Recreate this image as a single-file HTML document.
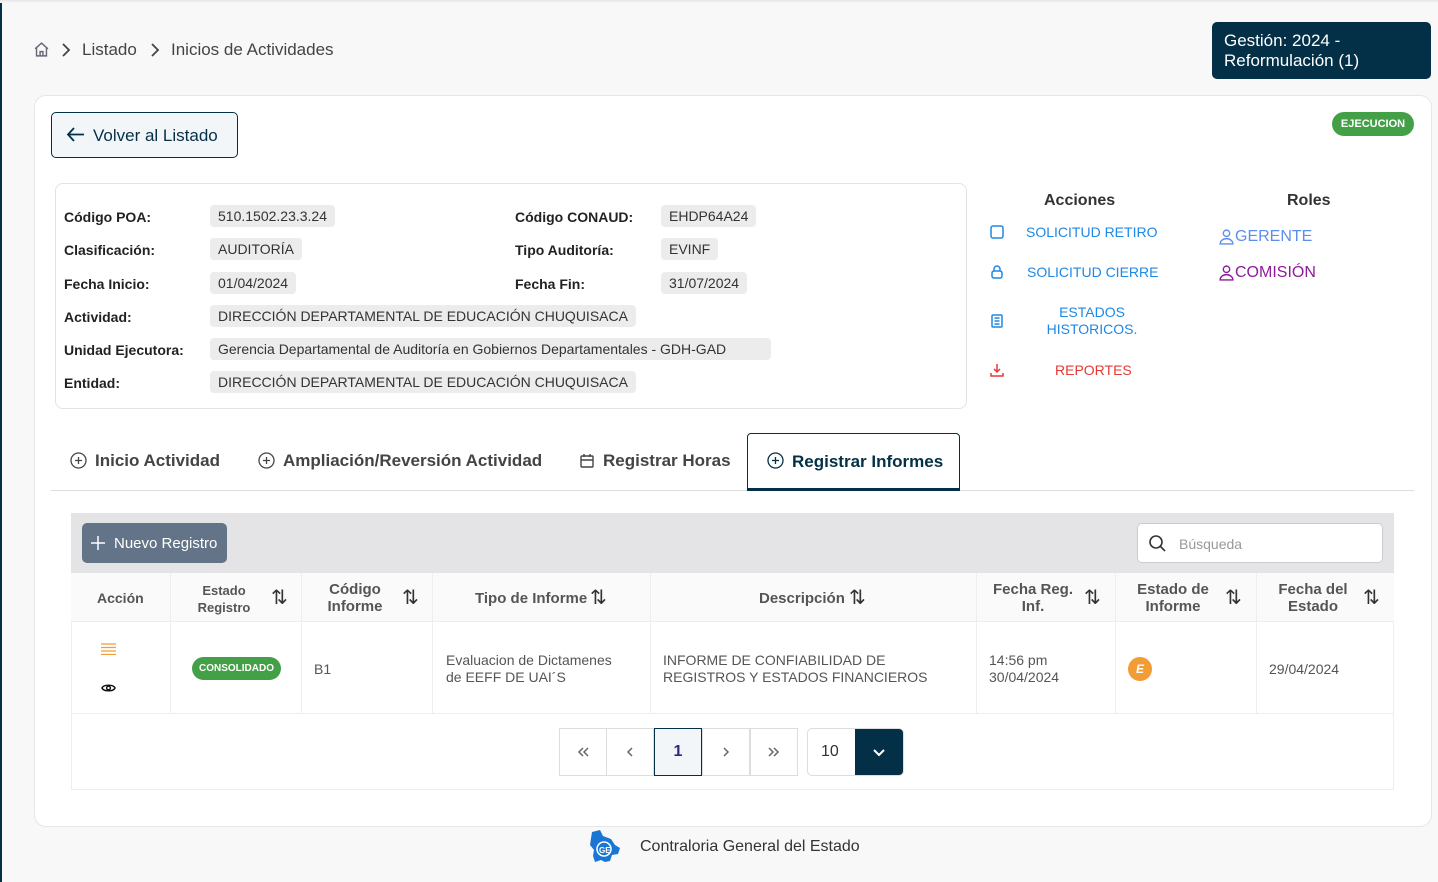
<!DOCTYPE html>
<html><head><meta charset="utf-8"><style>
*{box-sizing:border-box;margin:0;padding:0}
body{width:1438px;height:882px;background:#f8f8f8;font-family:"Liberation Sans",sans-serif;color:#333;position:relative;overflow:hidden}
.a{position:absolute}
.lbl{font-size:14px;font-weight:bold;color:#222}
.val{background:#ececec;border-radius:4px;padding:3px 8px;font-size:14px;color:#333;white-space:nowrap}
.th{font-size:14px;font-weight:bold;color:#555;text-align:center;line-height:17px}
.td{font-size:14px;color:#555;line-height:17px}
.vl{position:absolute;top:0;bottom:0;width:1px;background:#eee}
.pg{position:absolute;top:0;width:48px;height:48px;border:1px solid #ddd;display:flex;align-items:center;justify-content:center;color:#666;font-size:16px;background:#fff}
.so{position:absolute;font-size:20px;color:#333;line-height:20px}
</style></head><body>
<div class="a" style="left:0;top:0;width:2px;height:882px;background:#043047"></div>
<div class="a" style="left:0;top:0;width:1438px;height:3px;background:linear-gradient(#e6e6e6,#f8f8f8)"></div>
<svg class="a" style="left:33px;top:41px" width="17" height="17" viewBox="0 0 24 24" fill="none" stroke="#667" stroke-width="2"><path d="M3 11L12 3l9 8M5 9v12h14V9M10 21v-6h4v6"/></svg>
<svg class="a" style="left:61px;top:43px" width="10" height="14" viewBox="0 0 10 14" fill="none" stroke="#444" stroke-width="1.8"><path d="M2 1l6 6-6 6"/></svg>
<div class="a" style="left:82px;top:40px;font-size:17px;color:#444">Listado</div>
<svg class="a" style="left:150px;top:43px" width="10" height="14" viewBox="0 0 10 14" fill="none" stroke="#444" stroke-width="1.8"><path d="M2 1l6 6-6 6"/></svg>
<div class="a" style="left:171px;top:40px;font-size:17px;color:#444">Inicios de Actividades</div>
<div class="a" style="left:1212px;top:22px;width:219px;height:57px;background:#043047;border-radius:5px;color:#fff;font-size:17px;line-height:20px;padding:9px 12px">Gestión: 2024 -<br>Reformulación (1)</div>
<div class="a" style="left:34px;top:95px;width:1398px;height:732px;background:#fff;border:1px solid #e6e6e6;border-radius:12px"></div>
<div class="a" style="left:51px;top:112px;width:187px;height:46px;border:1px solid #043047;border-radius:5px;background:#f3f6f9;font-size:17px;color:#043047;padding:13px 0 0 41px">Volver al Listado</div>
<svg class="a" style="left:66px;top:126px" width="19" height="17" viewBox="0 0 19 17" fill="none" stroke="#043047" stroke-width="1.8"><path d="M18 8.5H2M8 2L2 8.5 8 15"/></svg>
<div class="a" style="left:1332px;top:112px;width:82px;height:24px;background:#43a047;border-radius:12px;color:#fff;font-size:11px;font-weight:bold;text-align:center;line-height:24px">EJECUCION</div>
<div class="a" style="left:55px;top:183px;width:912px;height:226px;border:1px solid #e3e3e3;border-radius:8px"></div>
<div class="a lbl" style="left:64px;top:209px">Código POA:</div><div class="a val" style="left:210px;top:205px">510.1502.23.3.24</div>
<div class="a lbl" style="left:515px;top:209px">Código CONAUD:</div><div class="a val" style="left:661px;top:205px">EHDP64A24</div>
<div class="a lbl" style="left:64px;top:242px">Clasificación:</div><div class="a val" style="left:210px;top:238px">AUDITORÍA</div>
<div class="a lbl" style="left:515px;top:242px">Tipo Auditoría:</div><div class="a val" style="left:661px;top:238px">EVINF</div>
<div class="a lbl" style="left:64px;top:276px">Fecha Inicio:</div><div class="a val" style="left:210px;top:272px">01/04/2024</div>
<div class="a lbl" style="left:515px;top:276px">Fecha Fin:</div><div class="a val" style="left:661px;top:272px">31/07/2024</div>
<div class="a lbl" style="left:64px;top:309px">Actividad:</div><div class="a val" style="left:210px;top:305px">DIRECCIÓN DEPARTAMENTAL DE EDUCACIÓN CHUQUISACA</div>
<div class="a lbl" style="left:64px;top:342px">Unidad Ejecutora:</div><div class="a val" style="left:210px;top:338px;width:561px">Gerencia Departamental de Auditoría en Gobiernos Departamentales - GDH-GAD</div>
<div class="a lbl" style="left:64px;top:375px">Entidad:</div><div class="a val" style="left:210px;top:371px">DIRECCIÓN DEPARTAMENTAL DE EDUCACIÓN CHUQUISACA</div>
<div class="a" style="left:1044px;top:192px;font-size:16px;font-weight:bold;color:#333">Acciones</div>
<div class="a" style="left:1287px;top:192px;font-size:16px;font-weight:bold;color:#333">Roles</div>
<svg class="a" style="left:989px;top:224px" width="16" height="16" viewBox="0 0 16 16" fill="none" stroke="#1e88e5" stroke-width="1.5"><rect x="2" y="2" width="12" height="12" rx="2"/></svg>
<div class="a" style="left:1026px;top:224px;font-size:14px;color:#1e88e5">SOLICITUD RETIRO</div>
<svg class="a" style="left:989px;top:264px" width="16" height="16" viewBox="0 0 16 16" fill="none" stroke="#1e88e5" stroke-width="1.5"><rect x="3" y="7" width="10" height="7" rx="2"/><path d="M5 7V5a3 3 0 016 0v2"/></svg>
<div class="a" style="left:1027px;top:264px;font-size:14px;color:#1e88e5">SOLICITUD CIERRE</div>
<svg class="a" style="left:989px;top:313px" width="16" height="16" viewBox="0 0 16 16" fill="none" stroke="#1e88e5" stroke-width="1.5"><rect x="3" y="2" width="10" height="12" rx="1"/><path d="M5.5 5h5M5.5 8h5M5.5 11h5"/></svg>
<div class="a" style="left:1030px;top:304px;width:124px;font-size:14px;color:#1e88e5;text-align:center;line-height:17px">ESTADOS HISTORICOS.</div>
<svg class="a" style="left:989px;top:362px" width="16" height="16" viewBox="0 0 16 16" fill="none" stroke="#e53935" stroke-width="1.5"><path d="M8 2v8M5 7l3 3 3-3M2 11v3h12v-3"/></svg>
<div class="a" style="left:1055px;top:362px;font-size:14px;color:#e53935">REPORTES</div>
<svg class="a" style="left:1218px;top:228px" width="17" height="17" viewBox="0 0 16 16" fill="none" stroke="#5c8ef0" stroke-width="1.3"><circle cx="8" cy="5" r="3"/><path d="M2 15c0-3 3-5 6-5s6 2 6 5z"/></svg>
<div class="a" style="left:1235px;top:228px;font-size:16px;color:#5c8ef0">GERENTE</div>
<svg class="a" style="left:1218px;top:264px" width="17" height="17" viewBox="0 0 16 16" fill="none" stroke="#8e1a9c" stroke-width="1.3"><circle cx="8" cy="5" r="3"/><path d="M2 15c0-3 3-5 6-5s6 2 6 5z"/></svg>
<div class="a" style="left:1235px;top:264px;font-size:16px;color:#8e1a9c">COMISIÓN</div>
<div class="a" style="left:51px;top:490px;width:1363px;height:1px;background:#ddd"></div>
<svg class="a" style="left:70px;top:452px" width="17" height="17" viewBox="0 0 17 17" fill="none" stroke="#444" stroke-width="1.3"><circle cx="8.5" cy="8.5" r="7.5"/><path d="M8.5 5v7M5 8.5h7"/></svg>
<div class="a" style="left:95px;top:451px;font-size:17px;font-weight:bold;color:#444">Inicio Actividad</div>
<svg class="a" style="left:258px;top:452px" width="17" height="17" viewBox="0 0 17 17" fill="none" stroke="#444" stroke-width="1.3"><circle cx="8.5" cy="8.5" r="7.5"/><path d="M8.5 5v7M5 8.5h7"/></svg>
<div class="a" style="left:283px;top:451px;font-size:17px;font-weight:bold;color:#444">Ampliación/Reversión Actividad</div>
<svg class="a" style="left:579px;top:453px" width="16" height="16" viewBox="0 0 16 16" fill="none" stroke="#444" stroke-width="1.4"><rect x="2" y="3" width="12" height="11" rx="1"/><path d="M2 7h12M5 1v3M11 1v3"/></svg>
<div class="a" style="left:603px;top:451px;font-size:17px;font-weight:bold;color:#444">Registrar Horas</div>
<div class="a" style="left:747px;top:433px;width:213px;height:58px;border:1px solid #043047;border-bottom:3px solid #043047;border-radius:4px 4px 0 0;background:#fff;font-size:17px;font-weight:bold;color:#043047;padding:18px 0 0 44px">Registrar Informes</div>
<svg class="a" style="left:767px;top:452px" width="17" height="17" viewBox="0 0 17 17" fill="none" stroke="#043047" stroke-width="1.3"><circle cx="8.5" cy="8.5" r="7.5"/><path d="M8.5 5v7M5 8.5h7"/></svg>
<div class="a" style="left:71px;top:513px;width:1323px;height:277px;border:1px solid #eee;background:#fff"></div>
<div class="a" style="left:71px;top:513px;width:1323px;height:60px;background:#e4e4e7"></div>
<div class="a" style="left:82px;top:523px;width:145px;height:40px;background:#647488;border-radius:5px;color:#fff;font-size:15px;padding:12px 0 0 32px">Nuevo Registro</div>
<svg class="a" style="left:91px;top:536px" width="14" height="14" viewBox="0 0 14 14" stroke="#fff" stroke-width="1.5"><path d="M7 0v14M0 7h14"/></svg>
<div class="a" style="left:1137px;top:523px;width:246px;height:40px;background:#fff;border:1px solid #ccc;border-radius:5px;font-size:14px;color:#999;padding:12px 0 0 41px">Búsqueda</div>
<svg class="a" style="left:1148px;top:534px" width="18" height="18" viewBox="0 0 18 18" fill="none" stroke="#333" stroke-width="1.6"><circle cx="8" cy="8" r="6"/><path d="M12.5 12.5L17 17"/></svg>
<div class="a" style="left:71px;top:573px;width:1323px;height:49px;background:#fafafa;border-bottom:1px solid #eee"></div>
<div class="a" style="left:71px;top:573px;width:1323px;height:141px;border-bottom:1px solid #eee">
<div class="vl" style="left:99px"></div><div class="vl" style="left:230px"></div><div class="vl" style="left:361px"></div><div class="vl" style="left:579px"></div><div class="vl" style="left:905px"></div><div class="vl" style="left:1044px"></div><div class="vl" style="left:1185px"></div>
</div>
<div class="a th" style="left:97px;top:590px">Acción</div>
<div class="a th" style="left:193px;top:582px;font-size:13px;width:62px">Estado Registro</div><div class="so" style="left:271px;top:588px">&#8645;</div>
<div class="a th" style="left:320px;top:581px;font-size:15px;width:70px">Código Informe</div><div class="so" style="left:402px;top:588px">&#8645;</div>
<div class="a th" style="left:475px;top:590px;font-size:15px">Tipo de Informe</div><div class="so" style="left:590px;top:588px">&#8645;</div>
<div class="a th" style="left:759px;top:590px;font-size:15px">Descripción</div><div class="so" style="left:849px;top:588px">&#8645;</div>
<div class="a th" style="left:986px;top:581px;font-size:15px;width:94px">Fecha Reg. Inf.</div><div class="so" style="left:1084px;top:588px">&#8645;</div>
<div class="a th" style="left:1132px;top:581px;font-size:15px;width:82px">Estado de Informe</div><div class="so" style="left:1225px;top:588px">&#8645;</div>
<div class="a th" style="left:1272px;top:581px;font-size:15px;width:82px">Fecha del Estado</div><div class="so" style="left:1363px;top:588px">&#8645;</div>
<svg class="a" style="left:101px;top:643px" width="15" height="12" viewBox="0 0 15 12" stroke="#f39c35" stroke-width="1.3"><path d="M0 1h15M0 4.5h15M0 8h15M0 11.5h15"/></svg>
<svg class="a" style="left:101px;top:681px" width="15" height="14" viewBox="0 0 16 14" fill="none" stroke="#111" stroke-width="1.5"><path d="M1 7c2-4 12-4 14 0-2 4-12 4-14 0z"/><circle cx="8" cy="7" r="2"/></svg>
<div class="a" style="left:192px;top:657px;width:89px;height:23px;background:#43a047;border-radius:12px;color:#fff;font-size:10px;font-weight:bold;text-align:center;line-height:23px">CONSOLIDADO</div>
<div class="a td" style="left:314px;top:661px">B1</div>
<div class="a td" style="left:446px;top:652px">Evaluacion de Dictamenes<br>de EEFF DE UAI´S</div>
<div class="a td" style="left:663px;top:652px">INFORME DE CONFIABILIDAD DE<br>REGISTROS Y ESTADOS FINANCIEROS</div>
<div class="a td" style="left:989px;top:652px">14:56 pm<br>30/04/2024</div>
<div class="a" style="left:1128px;top:657px;width:24px;height:24px;border-radius:50%;background:#f39c35;color:#fff;font-size:12px;font-weight:bold;font-style:italic;text-align:center;line-height:24px">E</div>
<div class="a td" style="left:1269px;top:661px">29/04/2024</div>
<div class="a" style="left:559px;top:728px;height:48px;width:240px">
<div class="pg" style="left:0"><svg width="14" height="12" viewBox="0 0 14 12" fill="none" stroke="#666" stroke-width="1.5"><path d="M7 2L3 6l4 4M12 2L8 6l4 4"/></svg></div>
<div class="pg" style="left:47px"><svg width="8" height="12" viewBox="0 0 8 12" fill="none" stroke="#666" stroke-width="1.5"><path d="M6 2L2 6l4 4"/></svg></div>
<div class="pg" style="left:95px;border-color:#043047;background:#f3f6f9;color:#2a2a7a;font-weight:bold">1</div>
<div class="pg" style="left:143px"><svg width="8" height="12" viewBox="0 0 8 12" fill="none" stroke="#666" stroke-width="1.5"><path d="M2 2l4 4-4 4"/></svg></div>
<div class="pg" style="left:191px"><svg width="14" height="12" viewBox="0 0 14 12" fill="none" stroke="#666" stroke-width="1.5"><path d="M2 2l4 4-4 4M7 2l4 4-4 4"/></svg></div></div>
<div class="a" style="left:807px;top:728px;width:97px;height:48px;border:1px solid #ddd;border-radius:5px;background:#fff;overflow:hidden">
<div class="a" style="left:13px;top:14px;font-size:16px;color:#333">10</div>
<div class="a" style="left:47px;top:0;width:49px;height:48px;background:#043047"></div>
<svg class="a" style="left:63px;top:18px" width="16" height="12" viewBox="0 0 16 12" fill="none" stroke="#fff" stroke-width="2"><path d="M3 3l5 5 5-5"/></svg></div>
<svg class="a" style="left:588px;top:829px" width="34" height="37" viewBox="0 0 34 37"><path d="M4 3l8-2 3 6 8 3 4 6 5 3-2 6-6 1-2 6-5 1-4-2-6 2-2-6 1-6-4-5z" fill="#1976d2"/><circle cx="16" cy="20" r="7" fill="none" stroke="#fff" stroke-width="1.5"/><text x="11" y="24" font-size="8" font-family="Liberation Sans" fill="#fff" font-weight="bold">GE</text></svg>
<div class="a" style="left:640px;top:838px;font-size:16px;color:#333">Contraloria General del Estado</div>
</body></html>
